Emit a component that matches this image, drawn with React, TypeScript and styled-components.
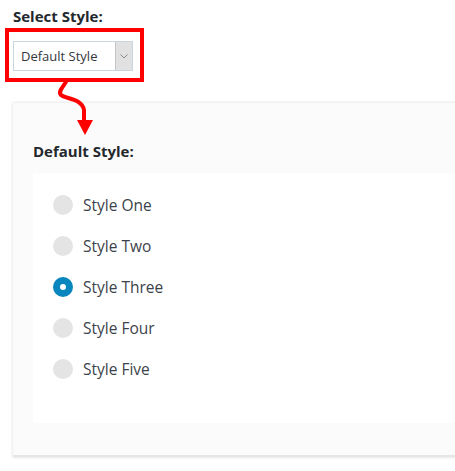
import React from "react";
import styled, { createGlobalStyle } from "styled-components";

const Global = createGlobalStyle`
  html, body { margin: 0; padding: 0; background: #fff; overflow: hidden; }
  body { font-family: "Open Sans", "Noto Sans", sans-serif; color: #23282d; }
`;

const Page = styled.div`
  position: relative;
  width: 455px;
  height: 471px;
  padding-top: 6px;
  box-sizing: border-box;
`;

const Heading = styled.h3<{ $indent: number }>`
  margin: 0;
  font-size: 15px;
  font-weight: 700;
  line-height: 20px;
  color: #23282d;
  padding-left: ${(p) => p.$indent}px;
`;

const Highlight = styled.div`
  display: flex;
  width: max-content;
  margin: 2px 0 0 5px;
  border: 4px solid #ff0000;
  padding: 9px 7px 7px 4px;
`;

const Select = styled.div`
  display: flex;
  width: 120px;
  height: 30px;
  box-sizing: border-box;
  border: 1px solid #c9d6e0;
  background: #fff;
  font-size: 13px;
  color: #32373c;
`;

const SelectValue = styled.span`
  flex: 1;
  display: flex;
  align-items: center;
  padding-left: 7px;
`;

const SelectButton = styled.span`
  width: 16px;
  display: flex;
  align-items: center;
  justify-content: center;
  background: #e1e1e1;
  border-left: 1px solid #c4c4c4;
`;

const Arrow = styled.svg`
  position: absolute;
  left: 52px;
  top: 82px;
  overflow: visible;
`;

const Panel = styled.div`
  margin-top: 21px;
  margin-left: 13px;
  width: 470px;
  height: 354px;
  box-sizing: border-box;
  background: #fbfbfb;
  box-shadow: 0 0 3px rgba(0, 0, 0, 0.16);
  border-bottom: 2px solid #e6e6e6;
  padding: 38px 0 0 20px;
`;

const Card = styled.div`
  margin-top: 12px;
  background: #fff;
  height: 250px;
  box-sizing: border-box;
  padding: 11px 0 0 20px;
`;

const Row = styled.label`
  display: flex;
  align-items: center;
  height: 41px;
  gap: 10px;
  font-size: 15.5px;
  color: #3c434a;
`;

const Dot = styled.span<{ $checked?: boolean }>`
  width: 20px;
  height: 20px;
  border-radius: 50%;
  box-sizing: border-box;
  background: ${(p) => (p.$checked ? "#fff" : "#e4e4e4")};
  border: ${(p) => (p.$checked ? "7px solid #0a86bf" : "none")};
`;

const styles = ["Style One", "Style Two", "Style Three", "Style Four", "Style Five"];

export default function App() {
  return (
    <>
      <Global />
      <Page>
        <Heading $indent={13}>Select Style:</Heading>
        <Highlight>
          <Select>
            <SelectValue>Default Style</SelectValue>
            <SelectButton>
              <svg width="8" height="5" viewBox="0 0 8 5">
                <path d="M0.5 0.5 L4 4 L7.5 0.5" fill="none" stroke="#888" strokeWidth="1" />
              </svg>
            </SelectButton>
          </Select>
        </Highlight>
        <Arrow width="45" height="55" viewBox="0 0 45 55">
          <path
            d="M14 0 C 10 6, 6 10, 9 13 C 13 17, 30 16, 32 28 L 32 38"
            fill="none"
            stroke="#ff0000"
            strokeWidth="4"
            strokeLinecap="round"
          />
          <polygon points="25,38 41,38 33,53" fill="#ff0000" />
        </Arrow>
        <Panel>
          <Heading $indent={0}>Default Style:</Heading>
          <Card>
            {styles.map((s, i) => (
              <Row key={s}>
                <Dot $checked={i === 2} />
                {s}
              </Row>
            ))}
          </Card>
        </Panel>
      </Page>
    </>
  );
}
